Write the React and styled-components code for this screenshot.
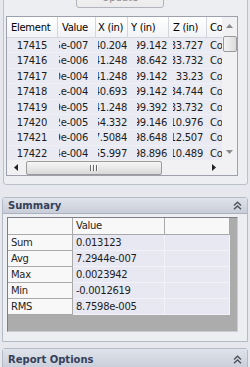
import React from 'react';
import styled, { createGlobalStyle } from 'styled-components';

const Global = createGlobalStyle`
  html, body { margin: 0; padding: 0; background: #e6e8ee; }
  body { font-family: "DejaVu Sans", "Noto Sans", sans-serif; overflow: hidden; }
`;

const Page = styled.div`
  width: 250px;
  height: 367px;
  overflow: hidden;
  display: flex;
  flex-direction: column;
  background: #e6e8ee;
`;

const GroupBox = styled.div`
  margin: -17px 2px 0 3px;
  padding: 2px 9px 8px 2px;
  border: 1px solid #bcc1cb;
  border-radius: 3px;
  background: #eceef2;
  display: flex;
  flex-direction: column;
`;

const UpdateButton = styled.button`
  align-self: center;
  width: 88px;
  height: 22px;
  margin: 0 0 8px -4px;
  padding: 0;
  border: 1px solid #b0b4bc;
  border-radius: 3px;
  background: linear-gradient(#f6f6f6, #ebebeb);
  color: #8d8d8d;
  font-family: "DejaVu Sans", sans-serif;
  font-size: 10px;
`;

const ListBox = styled.div`
  display: grid;
  grid-template-columns: 215px 15px;
  grid-template-rows: 143px 15px;
  border: 1px solid #9ca1ab;
  background: #e9eaf2;
  font-size: 10px;
  letter-spacing: -0.3px;
  color: #1c1c1c;
`;

const Listing = styled.div`
  overflow: hidden;
`;

const COLS = '51px 38px 32px 41px 38px 40px';

const HeaderRow = styled.div`
  display: grid;
  grid-template-columns: ${COLS};
  height: 20px;
  border-bottom: 1px solid #d3d6dc;
  background: linear-gradient(#ffffff, #f2f3f6);
`;

const HeaderCell = styled.div`
  border-right: 1px solid #d3d6dc;
  padding-left: ${(p) => p.$pad ?? 4}px;
  line-height: 21px;
  white-space: nowrap;
  overflow: hidden;
  color: #000;
`;

const DataRow = styled.div`
  display: grid;
  grid-template-columns: ${COLS};
  height: 15.4px;
  box-sizing: border-box;
  border-bottom: 1px solid #eef0f6;
`;

const DataCell = styled.div`
  padding: 0 ${(p) => p.$r ?? 4}px 0 ${(p) => p.$l ?? 4}px;
  display: flex;
  min-width: 0;
`;

const Clip = styled.div`
  flex: 1;
  min-width: 0;
  overflow: hidden;
  display: flex;
  justify-content: ${(p) => (p.$left ? 'flex-start' : 'flex-end')};
  line-height: 15px;
  white-space: nowrap;
`;

const VScroll = styled.div`
  grid-row: 1;
  grid-column: 2;
  background: #f1f1f3;
  display: flex;
  flex-direction: column;
  align-items: center;
`;

const HScroll = styled.div`
  grid-row: 2;
  grid-column: 1;
  background: #f1f1f3;
  display: flex;
  align-items: center;
`;

const Corner = styled.div`
  grid-row: 2;
  grid-column: 2;
  background: #f1f1f3;
`;

const ArrowBox = styled.div`
  width: ${(p) => p.$w}px;
  height: ${(p) => p.$h}px;
  display: flex;
  align-items: center;
  justify-content: center;
  flex: none;
`;

const VThumb = styled.div`
  width: 14px;
  height: 16px;
  margin-top: 1px;
  box-sizing: border-box;
  border: 1px solid #9a9a9a;
  border-radius: 2px;
  background: linear-gradient(90deg, #f4f4f4, #dcdcdc);
`;

const Spacer = styled.div`
  flex: 1;
`;

const HThumb = styled.div`
  width: 136px;
  height: 14px;
  margin-left: 2px;
  box-sizing: border-box;
  border: 1px solid #9a9a9a;
  border-radius: 2px;
  background: linear-gradient(#f6f6f6, #d9d9d9);
  display: flex;
  align-items: center;
  justify-content: center;
  gap: 1px;
`;

const Grip = styled.span`
  width: 1px;
  height: 6px;
  background: #666;
  box-shadow: 1px 0 0 #fff;
  margin-right: 1px;
`;

const Section = styled.div`
  margin: ${(p) => p.$mt}px 2px 0 2px;
  border: 1px solid #b4bac6;
  border-radius: 3px 3px 0 0;
  background: #eceef2;
  display: flex;
  flex-direction: column;
  flex: none;
`;

const SectionHeader = styled.div`
  height: ${(p) => p.$h}px;
  display: flex;
  align-items: center;
  justify-content: space-between;
  padding: 0 5px 0 5px;
  background: linear-gradient(#dfe3ea, #c7cdd9);
  border-bottom: 1px solid #aab1bf;
  font-weight: bold;
  font-size: 10px;
  color: #34405a;
`;

const SectionBody = styled.div`
  padding: 3px 9px 9px 4px;
`;

const SummaryGrid = styled.div`
  height: 115px;
  box-sizing: border-box;
  border: 1px solid #7d7f84;
  border-right-color: #c9ccd2;
  border-bottom-color: #c9ccd2;
  background: #acacac;
  font-size: 10px;
  letter-spacing: -0.3px;
  color: #1e1e1e;
`;

const SumRow = styled.div`
  display: grid;
  grid-template-columns: 65px 92px 65px;
  height: ${(p) => (p.$head ? 17 : 16)}px;
  box-sizing: border-box;
`;

const SumCell = styled.div`
  padding-left: 3px;
  white-space: nowrap;
  overflow: hidden;
  box-sizing: border-box;
  background: ${(p) => (p.$kind === 'label' || p.$kind === 'head' ? '#f8f8f8' : '#e7e8f1')};
  border-right: 1px solid ${(p) => (p.$kind === 'value' ? '#f2f3f8' : '#a9a9a9')};
  border-bottom: 1px solid ${(p) => (p.$kind === 'value' ? '#f2f3f8' : '#a9a9a9')};
  line-height: ${(p) => (p.$kind === 'head' ? 16 : 15)}px;
`;

const Chevrons = () => (
  <svg width="9" height="9" viewBox="0 0 9 9">
    <path d="M1 4.5 L4.5 1.2 L8 4.5 M1 8.3 L4.5 5 L8 8.3" fill="none" stroke="#4a4f5a" strokeWidth="1.3" />
  </svg>
);

const Tri = ({ dir, color = '#222' }) => {
  const pts = {
    up: '0,4 3.5,0 7,4',
    down: '0,0 7,0 3.5,4',
    left: '4,0 4,7 0,3.5',
    right: '0,0 0,7 4,3.5',
  }[dir];
  const vertical = dir === 'up' || dir === 'down';
  return (
    <svg width={vertical ? 7 : 4} height={vertical ? 4 : 7} viewBox={vertical ? '0 0 7 4' : '0 0 4 7'}>
      <polygon points={pts} fill={color} />
    </svg>
  );
};

const rows = [
  ['17415', '2.1975e-007', '140.204', '199.142', '133.727'],
  ['17416', '-3.4215e-006', '141.248', '198.642', '133.732'],
  ['17417', '1.2830e-004', '141.248', '199.142', '33.23'],
  ['17418', '1.1021e-004', '140.693', '199.142', '134.744'],
  ['17419', '6.5739e-005', '141.248', '199.392', '133.732'],
  ['17420', '2.6472e-005', '154.332', '199.146', '110.976'],
  ['17421', '3.5119e-006', '17.5084', '198.648', '112.507'],
  ['17422', '-1.8744e-004', '155.997', '198.896', '110.489'],
];

const summary = [
  ['Sum', '0.013123'],
  ['Avg', '7.2944e-007'],
  ['Max', '0.0023942'],
  ['Min', '-0.0012619'],
  ['RMS', '8.7598e-005'],
];

export default function App() {
  return (
    <Page>
      <Global />
      <GroupBox>
        <UpdateButton disabled>Update</UpdateButton>
        <ListBox>
          <Listing>
            <HeaderRow>
              <HeaderCell>Element</HeaderCell>
              <HeaderCell>Value</HeaderCell>
              <HeaderCell $pad={2}>X (in)</HeaderCell>
              <HeaderCell $pad={3}>Y (in)</HeaderCell>
              <HeaderCell $pad={4}>Z (in)</HeaderCell>
              <HeaderCell $pad={3}>Corner</HeaderCell>
            </HeaderRow>
            {rows.map((r) => (
              <DataRow key={r[0]}>
                <DataCell $r={11}><Clip>{r[0]}</Clip></DataCell>
                <DataCell $r={8} $l={1}><Clip>{r[1]}</Clip></DataCell>
                <DataCell $r={1} $l={2}><Clip>{r[2]}</Clip></DataCell>
                <DataCell $r={2} $l={9}><Clip>{r[3]}</Clip></DataCell>
                <DataCell $r={4} $l={4}><Clip>{r[4]}</Clip></DataCell>
                <DataCell $l={3}><Clip $left>Corner</Clip></DataCell>
              </DataRow>
            ))}
          </Listing>
          <VScroll>
            <ArrowBox $w={15} $h={18}><Tri dir="up" color="#8a8a8a" /></ArrowBox>
            <VThumb />
            <Spacer />
            <ArrowBox $w={15} $h={17}><Tri dir="down" color="#8a8a8a" /></ArrowBox>
          </VScroll>
          <HScroll>
            <ArrowBox $w={17} $h={15}><Tri dir="left" /></ArrowBox>
            <HThumb><Grip /><Grip /><Grip /></HThumb>
            <Spacer />
            <ArrowBox $w={17} $h={15}><Tri dir="right" /></ArrowBox>
          </HScroll>
          <Corner />
        </ListBox>
      </GroupBox>

      <Section $mt={12}>
        <SectionHeader $h={15}>
          <span>Summary</span>
          <Chevrons />
        </SectionHeader>
        <SectionBody>
          <SummaryGrid>
            <SumRow $head>
              <SumCell $kind="head" />
              <SumCell $kind="head">Value</SumCell>
              <SumCell $kind="head" />
            </SumRow>
            {summary.map(([k, v]) => (
              <SumRow key={k}>
                <SumCell $kind="label">{k}</SumCell>
                <SumCell $kind="value">{v}</SumCell>
                <SumCell $kind="value" />
              </SumRow>
            ))}
          </SummaryGrid>
        </SectionBody>
      </Section>

      <Section $mt={6}>
        <SectionHeader $h={20}>
          <span>Report Options</span>
          <Chevrons />
        </SectionHeader>
      </Section>
    </Page>
  );
}
